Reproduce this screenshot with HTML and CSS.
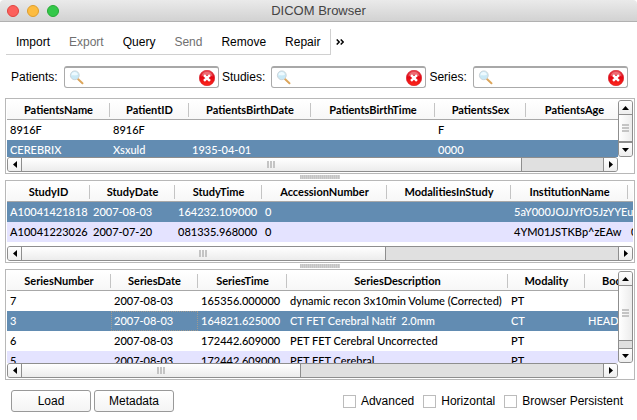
FILE: index.html
```html
<!DOCTYPE html>
<html lang="en">
<head>
<meta charset="utf-8">
<title>DICOM Browser</title>
<link rel="stylesheet" href="styles.css">
</head>
<body>
<svg class="defs" aria-hidden="true">
  <defs>
    <linearGradient id="red" x1="0" y1="0" x2="0" y2="1">
      <stop offset="0" stop-color="#e8505a"/><stop offset=".45" stop-color="#e30613"/><stop offset="1" stop-color="#ff2a1c"/>
    </linearGradient>
    <linearGradient id="wood" x1="0" y1="1" x2="1" y2="0">
      <stop offset="0" stop-color="#c98a3c"/><stop offset="1" stop-color="#f0c27a"/>
    </linearGradient>
    <symbol id="lens" viewBox="0 0 16 16">
      <path d="M9 9l4.500 4.200" stroke="url(#wood)" stroke-width="2" stroke-linecap="round"/>
      <circle cx="5.800" cy="5.300" r="4.400" fill="#c9e9f6" stroke="#cdd5da" stroke-width="1"/>
      <path d="M2.500 5.500a3.300 3.300 0 0 1 6.500-1c-2 1.500-4 .5-6.500 1z" fill="#eefaff"/>
    </symbol>
    <symbol id="clear" viewBox="0 0 16 16">
      <circle cx="8" cy="8" r="7.700" fill="url(#red)" stroke="#d3131c" stroke-width=".6"/>
      <path d="M2.300 6.500a5.900 5.900 0 0 1 11.400 0c-3-2-8-2-11.400 0z" fill="#fff" opacity=".3"/>
      <path d="M5.900 5.900l4.200 4.200M10.100 5.900l-4.200 4.200" stroke="#fff" stroke-width="2.500" stroke-linecap="square"/>
    </symbol>
  </defs>
</svg>
<div class="window">
  <header class="titlebar">
    <div class="lights">
      <button class="light close" aria-label="Close"></button>
      <button class="light minimise" aria-label="Minimise"></button>
      <button class="light maximise" aria-label="Maximise"></button>
    </div>
    <h1>DICOM Browser</h1>
  </header>

  <nav class="toolbar">
    <div class="tools">
      <button>Import</button>
      <button disabled>Export</button>
      <button>Query</button>
      <button disabled>Send</button>
      <button>Remove</button>
      <button>Repair</button>
    </div>
    <button class="more" aria-label="More tools">
      <svg width="8" height="6" viewBox="0 0 8 6"><path d="M.7.500l2.500 2.500-2.500 2.500M4.700.500l2.500 2.500-2.500 2.500" fill="none" stroke="#000" stroke-width="1.500"/></svg>
    </button>
  </nav>

  <form class="search">
    <label for="patients">Patients:</label>
    <div class="field">
      <svg class="lens"><use href="#lens"/></svg>
      <input id="patients" type="text">
      <button type="reset" aria-label="Clear patients"><svg><use href="#clear"/></svg></button>
    </div>
    <label for="studies">Studies:</label>
    <div class="field">
      <svg class="lens"><use href="#lens"/></svg>
      <input id="studies" type="text">
      <button type="reset" aria-label="Clear studies"><svg><use href="#clear"/></svg></button>
    </div>
    <label for="series">Series:</label>
    <div class="field">
      <svg class="lens"><use href="#lens"/></svg>
      <input id="series" type="text">
      <button type="reset" aria-label="Clear series"><svg><use href="#clear"/></svg></button>
    </div>
  </form>

  <main>
    <section class="panel patients">
      <div class="view">
        <table>
          <colgroup><col class="w103"><col class="w79"><col class="w122"><col class="w124"><col class="w91"><col class="w97"></colgroup>
          <thead><tr><th>PatientsName</th><th>PatientID</th><th>PatientsBirthDate</th><th>PatientsBirthTime</th><th>PatientsSex</th><th>PatientsAge</th></tr></thead>
          <tbody>
            <tr><td>8916F</td><td>8916F</td><td></td><td></td><td>F</td><td></td></tr>
            <tr class="selected"><td>CEREBRIX</td><td>Xsxuld</td><td>1935-04-01</td><td></td><td>0000</td><td></td></tr>
          </tbody>
        </table>
      </div>
      <div class="bar vertical">
        <button aria-label="Scroll up"><svg width="7" height="4" viewBox="0 0 7 4"><path d="M0 4L3.500 0 7 4z"/></svg></button>
        <div class="track"><div class="thumb"><i></i></div></div>
        <button aria-label="Scroll down"><svg width="7" height="4" viewBox="0 0 7 4"><path d="M0 0l3.500 4L7 0z"/></svg></button>
      </div>
      <div class="bar horizontal">
        <button aria-label="Scroll left"><svg width="4" height="7" viewBox="0 0 4 7"><path d="M4 0L0 3.500 4 7z"/></svg></button>
        <div class="track"><div class="thumb"><i></i></div></div>
        <button aria-label="Scroll right"><svg width="4" height="7" viewBox="0 0 4 7"><path d="M0 0l4 3.500L0 7z"/></svg></button>
      </div>
    </section>

    <div class="splitter"></div>

    <section class="panel studies">
      <div class="view">
        <table>
          <colgroup><col class="w83"><col class="w85"><col class="w87"><col class="w125"><col class="w124"><col class="w117"><col class="w128"></colgroup>
          <thead><tr><th>StudyID</th><th>StudyDate</th><th>StudyTime</th><th>AccessionNumber</th><th>ModalitiesInStudy</th><th>InstitutionName</th><th></th></tr></thead>
          <tbody>
            <tr class="selected"><td>A10041421818</td><td>2007-08-03</td><td>164232.109000</td><td>0</td><td></td><td>5aY000JOJJYfO5JzYYEu</td><td></td></tr>
            <tr class="alt"><td>A10041223026</td><td>2007-07-20</td><td>081335.968000</td><td>0</td><td></td><td>4YM01JSTKBp^zEAw</td><td>0</td></tr>
          </tbody>
        </table>
      </div>
      <div class="bar horizontal">
        <button aria-label="Scroll left"><svg width="4" height="7" viewBox="0 0 4 7"><path d="M4 0L0 3.500 4 7z"/></svg></button>
        <div class="track"><div class="thumb"><i></i></div></div>
        <button aria-label="Scroll right"><svg width="4" height="7" viewBox="0 0 4 7"><path d="M0 0l4 3.500L0 7z"/></svg></button>
      </div>
    </section>

    <div class="splitter"></div>

    <section class="panel series">
      <div class="view">
        <table>
          <colgroup><col class="w104"><col class="w87"><col class="w89"><col class="w221"><col class="w77"><col class="w128"></colgroup>
          <thead><tr><th>SeriesNumber</th><th>SeriesDate</th><th>SeriesTime</th><th>SeriesDescription</th><th>Modality</th><th>BodyPartExamined</th></tr></thead>
          <tbody>
            <tr><td>7</td><td>2007-08-03</td><td>165356.000000</td><td>dynamic recon 3x10min Volume (Corrected)</td><td>PT</td><td></td></tr>
            <tr class="selected"><td>3</td><td class="current">2007-08-03</td><td>164821.625000</td><td>CT FET Cerebral Natif&nbsp; 2.0mm</td><td>CT</td><td>HEAD</td></tr>
            <tr><td>6</td><td>2007-08-03</td><td>172442.609000</td><td>PET FET Cerebral Uncorrected</td><td>PT</td><td></td></tr>
            <tr class="alt"><td>5</td><td>2007-08-03</td><td>172442.609000</td><td>PET FET Cerebral</td><td>PT</td><td></td></tr>
          </tbody>
        </table>
      </div>
      <div class="bar vertical">
        <button aria-label="Scroll up"><svg width="7" height="4" viewBox="0 0 7 4"><path d="M0 4L3.500 0 7 4z"/></svg></button>
        <div class="track"><div class="thumb"><i></i></div></div>
        <button aria-label="Scroll down"><svg width="7" height="4" viewBox="0 0 7 4"><path d="M0 0l3.500 4L7 0z"/></svg></button>
      </div>
      <div class="bar horizontal">
        <button aria-label="Scroll left"><svg width="4" height="7" viewBox="0 0 4 7"><path d="M4 0L0 3.500 4 7z"/></svg></button>
        <div class="track"><div class="thumb"><i></i></div></div>
        <button aria-label="Scroll right"><svg width="4" height="7" viewBox="0 0 4 7"><path d="M0 0l4 3.500L0 7z"/></svg></button>
      </div>
    </section>
  </main>

  <footer>
    <button>Load</button>
    <button>Metadata</button>
    <div class="options">
      <label><input type="checkbox">Advanced</label>
      <label><input type="checkbox">Horizontal</label>
      <label><input type="checkbox">Browser Persistent</label>
    </div>
  </footer>
</div>
</body>
</html>
```
FILE: styles.css
```css
* { box-sizing: border-box; }

body {
  margin: 0;
  background: #fff;
  color: #000;
  font: 12px/16px "Liberation Sans", Arial, sans-serif;
}

button, input { font: inherit; color: inherit; margin: 0; padding: 0; }
svg { display: block; }
.defs { position: absolute; width: 0; height: 0; }

.window { display: flex; flex-direction: column; height: 100vh; }

/* title bar */
.titlebar {
  flex: none;
  display: grid;
  grid-template-columns: 1fr auto 1fr;
  align-items: center;
  height: 22px;
  padding: 0 7px;
  border-bottom: 1px solid #b1b1b1;
  border-radius: 4px 4px 0 0;
  background: linear-gradient(#eaeaea, #d2d2d2);
}
.titlebar h1 { margin: 0; font-size: 13px; font-weight: 400; color: #444; }
.lights { display: flex; gap: 8px; }
.light { width: 12px; height: 12px; border: 1px solid; border-radius: 50%; }
.close { background: #fc605c; border-color: #e0443f; }
.minimise { background: #fdbc40; border-color: #df9e2c; }
.maximise { background: #34c84a; border-color: #27aa35; }

/* toolbar */
.toolbar { display: flex; align-items: center; padding: 7px 6px 0; }
.tools {
  display: flex;
  height: 26px;
  padding: 0 10px 0 1px;
  border-right: 1px solid #d0d0d0;
  border-bottom: 1px solid #d0d0d0;
}
.toolbar button { border: 0; background: none; }
.tools button { padding: 0 10px 0 9px; }
.tools button:last-child { padding-right: 0; }
.tools button:disabled { color: #707070; }
.toolbar .more { padding: 0 5px; }

/* search row */
.search { display: flex; align-items: center; gap: 3px; padding: 11px 9px 10px 11px; }
.search label { margin-right: 3px; }
.field {
  flex: 1;
  display: flex;
  align-items: center;
  min-width: 0;
  height: 22px;
  padding: 0 3px 0 4px;
  border: 1px solid #aaa;
  border-top: 2px solid #a8a8a8;
  border-radius: 3px;
}
.field .lens { width: 16px; height: 16px; flex: none; }
.field input { flex: 1; min-width: 0; border: 0; outline: 0; background: none; }
.field button { border: 0; background: none; }
.field button svg { width: 16px; height: 16px; }

/* panels */
main { flex: 1; min-height: 0; display: flex; flex-direction: column; padding: 0 2px 0 5px; }
.panel {
  display: grid;
  grid-template-columns: minmax(0, 1fr) auto;
  grid-template-rows: minmax(0, 1fr) 15px;
  min-height: 0;
  padding: 1px;
  border: 1px solid #b8b8b8;
}
.panel.patients { flex: 1 1 76px; }
.panel.studies { flex: 1 1 83px; }
.panel.series { flex: 1 1 111px; }
.view { overflow: hidden; }
.splitter {
  flex: none;
  align-self: center;
  width: 40px;
  height: 4px;
  margin: 1px 0;
  background: repeating-linear-gradient(90deg, #c4c4c4 0 1px, #d0d0d0 1px 2px);
}

/* tables */
table {
  width: 0;
  table-layout: fixed;
  border-collapse: separate;
  border-spacing: 0;
  font: 500 11px/16px Lato, "Open Sans", sans-serif;
}
th, td { height: 20px; padding: 0 3px; white-space: nowrap; }
td { padding-right: 0; text-align: left; }
th {
  font-weight: 700;
  text-align: center;
  border-bottom: 1px solid #a8a8a8;
  background: linear-gradient(#c4c4c4, #c4c4c4) right 3px / 1px 14px no-repeat, linear-gradient(#fff, #f7f7f7);
}
.alt { background: #e4e3ff; }
.selected { background: #628cb2; color: #fff; }
.current { outline: 1px dotted #a09a90; outline-offset: -1px; }

.w77 { width: 77px; }
.w79 { width: 79px; }
.w83 { width: 83px; }
.w85 { width: 85px; }
.w87 { width: 87px; }
.w89 { width: 89px; }
.w91 { width: 91px; }
.w97 { width: 97px; }
.w103 { width: 103px; }
.w104 { width: 104px; }
.w117 { width: 117px; }
.w122 { width: 122px; }
.w124 { width: 124px; }
.w125 { width: 125px; }
.w128 { width: 128px; }
.w221 { width: 221px; }

/* scroll bars */
.bar { display: flex; overflow: hidden; border: 1px solid #8e8e8e; border-radius: 3px; background: #e0e0e0; }
.bar button {
  flex: none;
  display: grid;
  place-items: center;
  width: 13px;
  height: 13px;
  border: 0;
  background: linear-gradient(#fff, #eee);
}
.track { flex: 1; display: flex; min-width: 0; min-height: 0; }
.thumb { display: grid; place-items: center; border: 0 solid #8e8e8e; }
.vertical { flex-direction: column; width: 15px; }
.vertical .track { flex-direction: column; border: 1px solid #8e8e8e; border-width: 1px 0; }
.vertical .thumb { border-bottom-width: 1px; background: linear-gradient(90deg, #fff, #ececec); }
.vertical i { width: 7px; height: 8px; background: repeating-linear-gradient(#c4c4c4 0 2px, transparent 2px 3px); }
.horizontal .track { border: 1px solid #8e8e8e; border-width: 0 1px; }
.horizontal .thumb { border-right-width: 1px; background: linear-gradient(#fff, #ececec); }
.horizontal i { width: 8px; height: 7px; background: repeating-linear-gradient(90deg, #c4c4c4 0 2px, transparent 2px 3px); }

.patients .horizontal .thumb { width: 86%; }
.patients .vertical .thumb { height: 100%; }
.studies .horizontal { grid-column: 1 / -1; }
.studies .view { grid-column: 1 / -1; }
.studies .horizontal .thumb { width: 61%; }
.series .horizontal .thumb { width: 48%; }
.series .vertical .thumb { height: 88%; }

/* footer */
footer { flex: none; display: flex; align-items: center; gap: 3px; padding: 10px 14px 8px 11px; }
footer button {
  width: 80px;
  height: 22px;
  border: 1px solid #999;
  border-radius: 3px;
  background: linear-gradient(#fff, #f4f4f4);
}
.options { display: flex; gap: 9px; margin-left: auto; }
.options label { display: flex; align-items: center; gap: 5px; }
.options input {
  appearance: none;
  width: 13px;
  height: 13px;
  border: 1px solid #bcbcbc;
  background: #fff;
}
```
